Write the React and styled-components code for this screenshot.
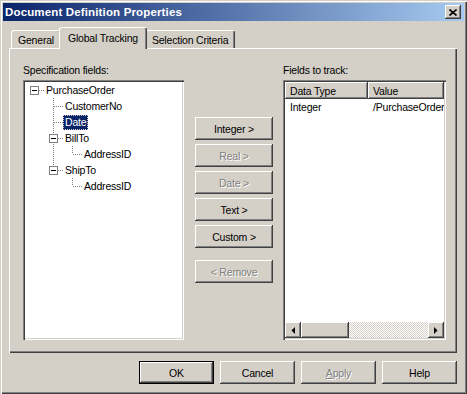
import React from "react";
import styled, { createGlobalStyle, css } from "styled-components";

const GlobalStyle = createGlobalStyle`
  html, body { margin: 0; padding: 0; }
  body {
    background: #d4d0c8;
    font-family: "Liberation Sans", Arial, sans-serif;
    font-size: 10.5px;
    letter-spacing: -0.2px;
    color: #000;
  }
`;

const raised = css`
  box-shadow: inset -1px -1px #404040, inset 1px 1px #fff, inset -2px -2px #808080;
`;

const sunken = css`
  box-shadow: inset 1px 1px #808080, inset 2px 2px #404040, inset -1px -1px #fff,
    inset -2px -2px #d4d0c8;
`;

const Window = styled.div`
  width: 467px;
  height: 394px;
  box-sizing: border-box;
  padding: 3px;
  background: #d4d0c8;
  box-shadow: inset 1px 1px #d4d0c8, inset 2px 2px #fff, inset -1px -1px #404040,
    inset -2px -2px #808080;
  display: flex;
  flex-direction: column;
`;

const TitleBar = styled.div`
  height: 18px;
  display: flex;
  align-items: center;
  justify-content: space-between;
  padding: 0 3px 0 2px;
  background: linear-gradient(to right, #0a246a, #a6caf0);
  color: #fff;
  font-size: 11.5px;
  letter-spacing: 0.15px;
  font-weight: bold;
`;

const CloseBox = styled.div`
  width: 16px;
  height: 14px;
  background: #d4d0c8;
  ${raised};
  display: flex;
  align-items: center;
  justify-content: center;
`;

const TabStrip = styled.div`
  display: flex;
  align-items: flex-end;
  height: 21px;
  margin: 6px 0 0 8px;
  position: relative;
  z-index: 1;
`;

const Tab = styled.div`
  height: 18px;
  box-sizing: border-box;
  padding: 0 6px;
  display: flex;
  align-items: center;
  border-top: 1px solid #fff;
  border-left: 1px solid #fff;
  border-right: 1px solid #404040;
  box-shadow: inset -1px 0 #808080;
  border-radius: 3px 3px 0 0;
  background: #d4d0c8;
  white-space: nowrap;
  ${(p) =>
    p.$active &&
    css`
      height: 22px;
      margin: 0 -2px -1px;
      padding: 0 8px 2px;
      position: relative;
      z-index: 2;
    `}
`;

const Panel = styled.div`
  width: 448px;
  height: 305px;
  box-sizing: border-box;
  margin-left: 6px;
  padding: 16px 11px 0 14px;
  background: #d4d0c8;
  box-shadow: inset 1px 1px #fff, inset -1px -1px #404040, inset -2px -2px #808080;
  display: flex;
  align-items: flex-start;
`;

const Column = styled.div`
  width: ${(p) => p.$w}px;
  margin-right: ${(p) => p.$gap || 0}px;
  display: flex;
  flex-direction: column;
`;

const Label = styled.div`
  line-height: 13px;
  margin-bottom: 3px;
`;

const Well = styled.div`
  height: 260px;
  box-sizing: border-box;
  padding: 2px;
  background: #fff;
  ${sunken};
  display: flex;
  flex-direction: column;
  overflow: hidden;
`;

const ButtonStack = styled.div`
  padding-top: 53px;
  display: flex;
  flex-direction: column;
  gap: 4px;
`;

const Button = styled.button`
  width: ${(p) => p.$w || 75}px;
  height: 23px;
  padding: 0;
  margin: 0;
  border: none;
  font: inherit;
  letter-spacing: inherit;
  background: #d4d0c8;
  color: #000;
  ${raised};
  ${(p) =>
    p.$default &&
    css`
      box-shadow: inset 0 0 0 1px #000, inset -2px -2px #404040, inset 2px 2px #fff,
        inset -3px -3px #808080;
    `}
  ${(p) =>
    p.$off &&
    css`
      color: #808080;
      text-shadow: 1px 1px #fff;
    `}
  ${(p) => p.$spaced && "margin-top: 8px;"}
`;

const TreeRow = styled.div`
  height: 16px;
  display: flex;
  align-items: center;
`;

const TreeLabel = styled.span`
  line-height: 15px;
  height: 15px;
  padding: 0 2px;
  white-space: nowrap;
  ${(p) =>
    p.$selected &&
    css`
      background: #0a246a;
      color: #fff;
      outline: 1px dotted #d4d0c8;
      outline-offset: -1px;
    `}
`;

const HeaderRow = styled.div`
  display: flex;
  height: 17px;
  flex-shrink: 0;
`;

const HeaderCell = styled.div`
  width: ${(p) => (p.$w ? `${p.$w}px` : "auto")};
  flex: ${(p) => (p.$w ? "none" : "1")};
  box-sizing: border-box;
  padding-left: 5px;
  display: flex;
  align-items: center;
  background: #d4d0c8;
  ${raised};
  white-space: nowrap;
  overflow: hidden;
`;

const ListBody = styled.div`
  flex: 1;
`;

const ListRow = styled.div`
  display: flex;
  height: 16px;
  align-items: center;
`;

const ListCell = styled.div`
  width: ${(p) => (p.$w ? `${p.$w}px` : "auto")};
  flex: ${(p) => (p.$w ? "none" : "1")};
  box-sizing: border-box;
  padding-left: 5px;
  white-space: nowrap;
  overflow: hidden;
`;

const HScroll = styled.div`
  height: 16px;
  flex-shrink: 0;
  display: flex;
`;

const ScrollBtn = styled.div`
  width: ${(p) => p.$w || 16}px;
  height: 16px;
  flex-shrink: 0;
  background: #d4d0c8;
  ${raised};
  display: flex;
  align-items: center;
  justify-content: center;
`;

const Track = styled.div`
  flex: 1;
  background: repeating-conic-gradient(#d4d0c8 0 25%, #fff 0 50%) 0 0 / 2px 2px;
`;

const Footer = styled.div`
  display: flex;
  justify-content: flex-end;
  gap: 6px;
  margin-top: 8px;
  padding-right: 7px;
`;

const Connector = ({ kind, expander }) => (
  <svg width="19" height="16" style={{ display: "block", flexShrink: 0 }}>
    {kind === "mid" && <line x1="9.5" y1="0" x2="9.5" y2="16" stroke="#808080" strokeDasharray="1 1" />}
    {kind === "last" && <line x1="9.5" y1="0" x2="9.5" y2="8" stroke="#808080" strokeDasharray="1 1" />}
    {kind === "guide" && <line x1="9.5" y1="0" x2="9.5" y2="16" stroke="#808080" strokeDasharray="1 1" />}
    {kind !== "guide" && kind !== "none" && (
      <line x1="10" y1="8.5" x2="19" y2="8.5" stroke="#808080" strokeDasharray="1 1" />
    )}
    {expander && (
      <g>
        <rect x="5.5" y="4.5" width="8" height="8" fill="#fff" stroke="#808080" />
        <line x1="7" y1="8.5" x2="12" y2="8.5" stroke="#000" />
      </g>
    )}
  </svg>
);

const treeRows = [
  { label: "PurchaseOrder", guides: [], kind: "root", expander: true },
  { label: "CustomerNo", guides: [false], kind: "mid" },
  { label: "Date", guides: [false], kind: "mid", selected: true },
  { label: "BillTo", guides: [false], kind: "mid", expander: true },
  { label: "AddressID", guides: [false, true], kind: "last" },
  { label: "ShipTo", guides: [false], kind: "last", expander: true },
  { label: "AddressID", guides: [false, false], kind: "last" },
];

const Arrow = ({ dir }) => (
  <svg width="4" height="7" style={{ display: "block" }}>
    {dir === "left" ? <polygon points="4,0 4,7 0.5,3.5" fill="#000" /> : <polygon points="0,0 0,7 3.5,3.5" fill="#000" />}
  </svg>
);

export default function App() {
  return (
    <>
      <GlobalStyle />
      <Window>
        <TitleBar>
          <span>Document Definition Properties</span>
          <CloseBox>
            <svg width="8" height="7" style={{ display: "block" }}>
              <path d="M0.5 0.5 L7.5 6.5 M7.5 0.5 L0.5 6.5" stroke="#000" strokeWidth="1.6" />
            </svg>
          </CloseBox>
        </TitleBar>

        <TabStrip>
          <Tab>General</Tab>
          <Tab $active>Global Tracking</Tab>
          <Tab>Selection Criteria</Tab>
        </TabStrip>

        <Panel>
          <Column $w={161} $gap={11}>
            <Label>Specification fields:</Label>
            <Well>
              {treeRows.map((r, i) => (
                <TreeRow key={i}>
                  {r.guides.map((g, j) => (
                    <Connector key={j} kind={g ? "guide" : "none"} />
                  ))}
                  <Connector kind={r.kind} expander={r.expander} />
                  <TreeLabel $selected={r.selected}>{r.label}</TreeLabel>
                </TreeRow>
              ))}
            </Well>
          </Column>

          <Column $w={78} $gap={10}>
            <ButtonStack>
              <Button $w={78}>Integer &gt;</Button>
              <Button $w={78} $off>Real &gt;</Button>
              <Button $w={78} $off>Date &gt;</Button>
              <Button $w={78}>Text &gt;</Button>
              <Button $w={78}>Custom &gt;</Button>
              <Button $w={78} $off $spaced>&lt; Remove</Button>
            </ButtonStack>
          </Column>

          <Column $w={163}>
            <Label>Fields to track:</Label>
            <Well>
              <HeaderRow>
                <HeaderCell $w={83}>Data Type</HeaderCell>
                <HeaderCell>Value</HeaderCell>
              </HeaderRow>
              <ListBody>
                <ListRow>
                  <ListCell $w={83}>Integer</ListCell>
                  <ListCell>/PurchaseOrder/Date</ListCell>
                </ListRow>
              </ListBody>
              <HScroll>
                <ScrollBtn><Arrow dir="left" /></ScrollBtn>
                <ScrollBtn $w={48} />
                <Track />
                <ScrollBtn><Arrow dir="right" /></ScrollBtn>
              </HScroll>
            </Well>
          </Column>
        </Panel>

        <Footer>
          <Button $default>OK</Button>
          <Button>Cancel</Button>
          <Button $off><u>A</u>pply</Button>
          <Button>Help</Button>
        </Footer>
      </Window>
    </>
  );
}
